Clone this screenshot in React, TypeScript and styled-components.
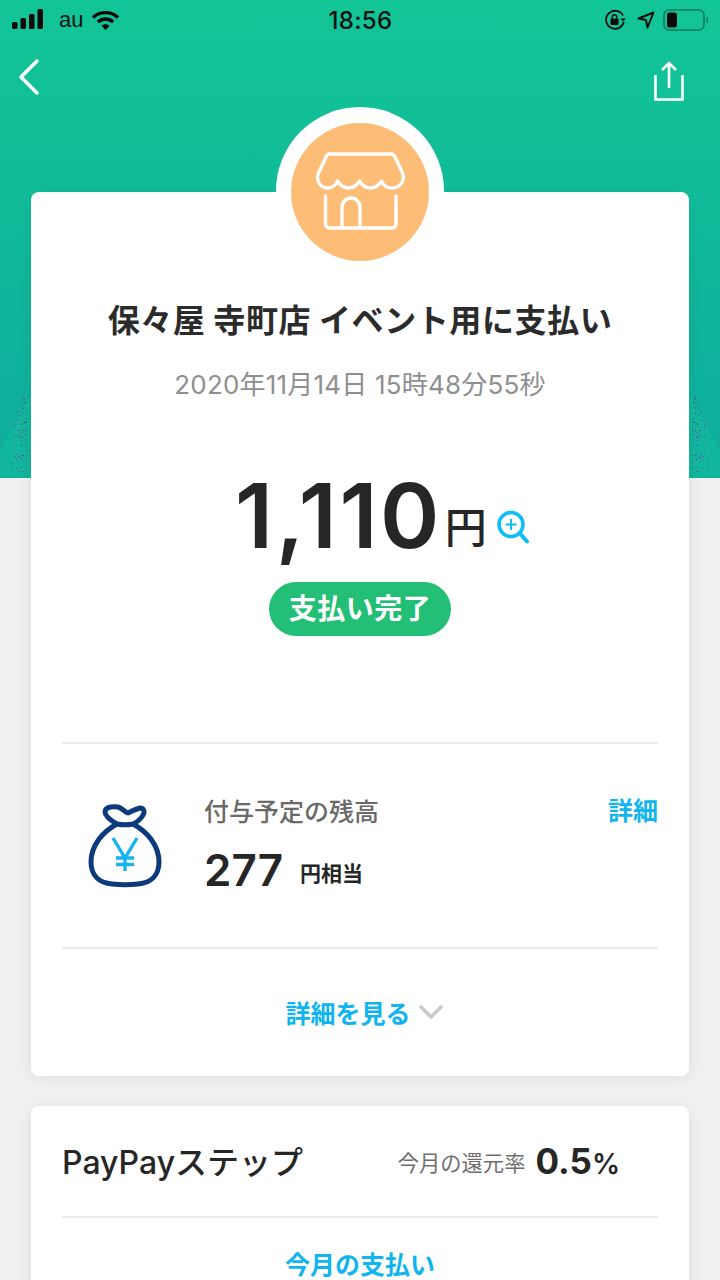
import React from "react";
import styled, { createGlobalStyle } from "styled-components";

const FONT = `"Noto Sans CJK JP", "Noto Sans", sans-serif`;
const LATIN = `Inter, "Noto Sans CJK JP", sans-serif`;
const BLUE = "#10b5f0";

const GlobalStyle = createGlobalStyle`
  html, body {
    margin: 0;
    padding: 0;
    height: 1280px;
    overflow: hidden;
    background: #f0f0f0;
    font-family: ${FONT};
  }
`;

const Page = styled.div`
  position: relative;
  width: 720px;
  height: 1280px;
  overflow: hidden;
`;

const Hero = styled.div`
  position: absolute;
  top: 0;
  left: 0;
  right: 0;
  height: 478px;
  background: linear-gradient(180deg, #12c596 0%, #11bc99 40%, #0fab9f 100%);
`;

const HeroCorner = styled.svg<{ $side: "left" | "right" }>`
  position: absolute;
  bottom: 0;
  ${(p) => p.$side}: 0;
  width: 31px;
  height: 90px;
`;

const Foreground = styled.div`
  position: relative;
  display: flex;
  flex-direction: column;
`;

const StatusBar = styled.div`
  height: 40px;
  padding: 0 11px 0 12px;
  display: grid;
  grid-template-columns: 1fr auto 1fr;
  align-items: center;
  color: #111;
`;

const StatusGroup = styled.div<{ $end?: boolean }>`
  display: flex;
  align-items: center;
  justify-content: ${(p) => (p.$end ? "flex-end" : "flex-start")};
  gap: 12px;
`;

const Carrier = styled.span`
  font-family: "Liberation Sans", sans-serif;
  font-size: 22px;
  margin-left: 3px;
`;

const Clock = styled.span`
  font-family: Inter, sans-serif;
  font-size: 24px;
  font-weight: 500;
  letter-spacing: 0.3px;
`;

const NavBar = styled.div`
  height: 74px;
  padding: 18px 36px 0 18px;
  display: flex;
  justify-content: space-between;
  align-items: flex-start;
  box-sizing: border-box;
`;

const Cards = styled.div`
  margin-top: 78px;
  padding: 0 31px;
  display: flex;
  flex-direction: column;
  gap: 30px;
`;

const Card = styled.section`
  position: relative;
  background: #fff;
  border-radius: 8px;
  box-shadow: 0 2px 14px rgba(0, 0, 0, 0.07);
`;

const ReceiptCard = styled(Card)`
  height: 884px;
  padding: 0 31px;
  box-sizing: border-box;
  display: flex;
  flex-direction: column;
  align-items: center;
`;

const AvatarRing = styled.div`
  position: absolute;
  top: -85px;
  left: 245px;
  width: 168px;
  height: 168px;
  padding-top: 2px;
  box-sizing: border-box;
  border-radius: 50%;
  background: #fff;
  display: flex;
  align-items: center;
  justify-content: center;
`;

const Avatar = styled.div`
  width: 138px;
  height: 138px;
  border-radius: 50%;
  background: #fdbd76;
  display: flex;
  align-items: center;
  justify-content: center;
`;

const ShopIcon = styled.svg`
  width: 90px;
  height: 78px;
  margin: 0 0 2px 2px;
  overflow: visible;
`;

const ShopTitle = styled.h1`
  margin: 102px 0 0;
  height: 48px;
  font-size: 32px;
  line-height: 48px;
  font-weight: 700;
  letter-spacing: 0.6px;
  color: #2b2b2b;
  white-space: nowrap;
`;

const PaidAt = styled.div`
  margin-top: 25px;
  height: 36px;
  font-family: ${LATIN};
  font-size: 26px;
  line-height: 36px;
  letter-spacing: 0.2px;
  color: #8f8f8f;
  white-space: nowrap;
`;

const AmountRow = styled.div`
  margin-top: 56px;
  height: 110px;
  display: flex;
  align-items: flex-end;
`;

const AmountValue = styled.span`
  font-family: Inter, sans-serif;
  font-size: 90px;
  line-height: 106px;
  font-weight: 600;
  letter-spacing: 2.500px;
  color: #262626;
`;

const AmountUnit = styled.span`
  margin: 0 0 16px 3px;
  font-size: 42px;
  line-height: 56px;
  font-weight: 500;
  color: #262626;
`;

const ZoomIcon = styled.svg`
  width: 32px;
  height: 34px;
  margin: 0 -44px 25px 10px;
`;

const StatusPill = styled.div`
  margin-top: 13px;
  height: 54px;
  padding: 0 20px;
  border-radius: 27px;
  background: #23bf76;
  color: #fff;
  font-size: 28px;
  line-height: 50px;
  font-weight: 700;
  letter-spacing: 0.5px;
`;

const Divider = styled.hr<{ $gap?: number }>`
  align-self: stretch;
  margin: ${(p) => p.$gap ?? 0}px 0 0;
  border: 0;
  border-top: 2px solid #ebebeb;
`;

const BalanceRow = styled.div`
  align-self: stretch;
  height: 203px;
  display: flex;
  box-sizing: border-box;
`;

const BagSlot = styled.div`
  width: 142px;
  padding: 60px 0 0 26px;
  box-sizing: border-box;
`;

const BalanceBody = styled.div`
  flex: 1;
  padding-top: 48px;
`;

const BalanceLabel = styled.div`
  font-size: 25px;
  line-height: 36px;
  font-weight: 500;
  color: #6a6a6a;
`;

const BalanceValue = styled.div`
  margin-top: 15px;
  display: flex;
  align-items: center;
  gap: 17px;
  color: #262626;
`;

const BalanceNumber = styled.span`
  font-family: Inter, sans-serif;
  font-size: 44px;
  line-height: 54px;
  font-weight: 600;
`;

const BalanceUnit = styled.span`
  margin-top: 4px;
  font-size: 21px;
  font-weight: 700;
`;

const LinkText = styled.span`
  font-size: 25px;
  line-height: 36px;
  font-weight: 700;
  color: ${BLUE};
`;

const DetailLink = styled(LinkText)`
  padding-top: 47px;
  height: fit-content;
`;

const MoreRow = styled.div`
  margin-top: 45px;
  margin-left: 8px;
  display: flex;
  align-items: center;
  gap: 8px;
`;

const StepCard = styled(Card)`
  height: 260px;
  padding: 0 31px;
`;

const StepHead = styled.div`
  height: 110px;
  display: flex;
  align-items: center;
  border-bottom: 2px solid #ebebeb;
`;

const StepTitle = styled.h2`
  margin: 0 0 2px;
  flex: 1;
  font-family: ${LATIN};
  font-size: 32px;
  font-weight: 500;
  color: #262626;
`;

const RateLabel = styled.span`
  font-size: 21.300px;
  color: #6e6e6e;
  margin-right: 10px;
`;

const RateValue = styled.span`
  font-family: Inter, sans-serif;
  font-size: 35px;
  font-weight: 700;
  color: #262626;
  margin-right: 38px;

  small {
    font-size: 28px;
    font-weight: 600;
  }
`;

const MonthLink = styled.div`
  margin-top: 27px;
  text-align: center;
`;

// scattered dither dots, thin at the top and wider towards the bottom
const noise = (n: number) => {
  const v = Math.sin(n * 127.1) * 43758.5453;
  return v - Math.floor(v);
};

const dots = (side: "left" | "right") => {
  const out: { x: number; y: number }[] = [];
  for (let i = 0; i < 60; i++) {
    const y = 8 + noise(i + 1) * 80;
    const spread = Math.min(16, 2 + (y / 40) * 14);
    const depth = 2 + noise(i + 101) * spread;
    out.push({ x: side === "left" ? 29 - depth : depth, y });
  }
  return out;
};

const Corner = ({ side }: { side: "left" | "right" }) => (
  <HeroCorner $side={side} viewBox="0 0 31 90">
    <polygon
      points={side === "left" ? "31,6 0,62 0,90 31,90" : "0,6 31,62 31,90 0,90"}
      fill="#12b69c"
    />
    {dots(side).map((d, i) => (
      <rect key={i} x={Math.round(d.x)} y={Math.round(d.y)} width="1" height="1" fill="#5a4f9c" />
    ))}
  </HeroCorner>
);

const Shop = () => (
  <ShopIcon viewBox="0 0 90 78" fill="none" stroke="#fff" strokeWidth="3.400" strokeLinecap="round" strokeLinejoin="round">
    <path d="M13 2H75C77 2 78 3 79 5L87 22C89 30 83 36 76 36C71 36 67 33 65.500 29C63 33 59 36 54.500 36C50 36 46 33 43.500 29C41 33 37 36 32.500 36C28 36 24 33 21.500 29C20 33 16 36 12 36C5 36 0 30 2 22L10 5C11 3 12 2 13 2Z" />
    <path d="M9.500 44V72a4 4 0 0 0 4 4H76a4 4 0 0 0 4-4V44" />
    <path d="M26 76V56C26 50 30 46 35 46C40 46 44 50 44 56V76" />
  </ShopIcon>
);

const Bag = () => (
  <svg width="74" height="84" viewBox="0 0 74 84" fill="none" strokeLinecap="round" strokeLinejoin="round">
    <path
      d="M29 20C14 28 3 42 3 58C3 72 12 79 24 80C32 81 42 81 50 80C62 79 71 72 71 58C71 42 60 28 45 20C49 18 53 15 55 11C57 8 56 4 52 4C48 5 44 7 40 9C37 8 34 4 30 3C24 2 17 3 17 8C17 12 22 16 29 20C34 21 40 21 45 20"
      stroke="#0d3a7d"
      strokeWidth="5"
    />
    <path d="M25 34L37 54L49 34M28 54H46M28 60.500H46M37 54V67" stroke="#15b4ee" strokeWidth="3.400" strokeLinecap="butt" strokeLinejoin="miter" />
  </svg>
);

export default function App() {
  return (
    <Page>
      <GlobalStyle />
      <Hero>
        <Corner side="left" />
        <Corner side="right" />
      </Hero>
      <Foreground>
        <StatusBar>
          <StatusGroup>
            <svg width="32" height="21" viewBox="0 0 32 21" fill="#0a0a0a" style={{ marginTop: -1 }}>
              <rect x="0" y="13" width="5.500" height="7" rx="1.500" />
              <rect x="8.500" y="9" width="5.500" height="11" rx="1.500" />
              <rect x="17" y="5" width="5.500" height="15" rx="1.500" />
              <rect x="25.500" y="0" width="5.500" height="20" rx="1.500" />
            </svg>
            <Carrier>au</Carrier>
            <svg width="29" height="21" viewBox="0 0 29 21" fill="none" stroke="#0a0a0a" strokeWidth="3.400" style={{ marginLeft: -4 }}>
              <path d="M2 7.500c7-6.500 18-6.500 25 0" />
              <path d="M6.800 12c4.500-4 10.900-4 15.400 0" />
              <path d="M14.500 20l-4-4.300c2.300-2 5.700-2 8 0z" fill="#0a0a0a" stroke="none" />
            </svg>
          </StatusGroup>
          <Clock>18:56</Clock>
          <StatusGroup $end>
            <svg width="22" height="22" viewBox="0 0 22 22" fill="none" stroke="#0a0a0a" strokeWidth="1.800">
              <path d="M19 6.500A9 9 0 1 0 19.800 13" />
              <path d="M16.500 9.500h5.500l-2.750 3z" fill="#0a0a0a" stroke="none" />
              <rect x="6.500" y="9.500" width="8" height="6.500" rx="1" fill="#0a0a0a" stroke="none" />
              <path d="M8.300 9.500V8a2.200 2.200 0 0 1 4.400 0v1.500" strokeWidth="1.400" />
            </svg>
            <svg width="18" height="18" viewBox="0 0 18 18" fill="none" stroke="#0a0a0a" strokeWidth="1.900" strokeLinejoin="round" style={{ marginLeft: -1 }}>
              <path d="M1.500 7.500L16.500 1.500 10.500 16.500 9 9z" />
            </svg>
            <svg width="46" height="22" viewBox="0 0 46 22" style={{ marginLeft: -4 }}>
              <rect x="1" y="1" width="40" height="20" rx="5" fill="none" stroke="#0a7a62" strokeWidth="1.600" />
              <rect x="4" y="3.500" width="10" height="15" rx="2.500" fill="#0a0a0a" />
              <rect x="43.500" y="8" width="1.500" height="6" rx="0.700" fill="#0a7a62" />
            </svg>
          </StatusGroup>
        </StatusBar>
        <NavBar>
          <svg width="24" height="38" viewBox="0 0 24 38" fill="none" stroke="#fff" strokeWidth="3.600" strokeLinecap="round" strokeLinejoin="round">
            <path d="M19 3L3 19l16 16" />
          </svg>
          <svg width="30" height="40" viewBox="0 0 30 40" fill="none" stroke="#fff" strokeWidth="2.600" style={{ marginTop: 3 }}>
            <path d="M8 9L15 2l7 7M15 2v25" />
            <path d="M1.500 14v24.500h27V14" />
          </svg>
        </NavBar>
        <Cards>
          <ReceiptCard>
            <AvatarRing>
              <Avatar>
                <Shop />
              </Avatar>
            </AvatarRing>
            <ShopTitle>保々屋 寺町店 イベント用に支払い</ShopTitle>
            <PaidAt>2020年11月14日 15時48分55秒</PaidAt>
            <AmountRow>
              <AmountValue>1,110</AmountValue>
              <AmountUnit>円</AmountUnit>
              <ZoomIcon viewBox="0 0 32 34" fill="none" stroke="#10bdf5">
                <circle cx="14" cy="14.500" r="12" strokeWidth="3.600" />
                <path d="M14 9v11M8.500 14.500h11" strokeWidth="2" />
                <path d="M23.500 24l6.500 7.500" strokeWidth="4" strokeLinecap="round" />
              </ZoomIcon>
            </AmountRow>
            <StatusPill>支払い完了</StatusPill>
            <Divider $gap={106} />
            <BalanceRow>
              <BagSlot>
                <Bag />
              </BagSlot>
              <BalanceBody>
                <BalanceLabel>付与予定の残高</BalanceLabel>
                <BalanceValue>
                  <BalanceNumber>277</BalanceNumber>
                  <BalanceUnit>円相当</BalanceUnit>
                </BalanceValue>
              </BalanceBody>
              <DetailLink>詳細</DetailLink>
            </BalanceRow>
            <Divider />
            <MoreRow>
              <LinkText>詳細を見る</LinkText>
              <svg width="24" height="15" viewBox="0 0 24 15" fill="none" stroke="#cbcbcb" strokeWidth="3.600" strokeLinecap="round" strokeLinejoin="round">
                <path d="M2 2l10 10L22 2" />
              </svg>
            </MoreRow>
          </ReceiptCard>
          <StepCard>
            <StepHead>
              <StepTitle>PayPayステップ</StepTitle>
              <RateLabel>今月の還元率</RateLabel>
              <RateValue>
                0.5<small>%</small>
              </RateValue>
            </StepHead>
            <MonthLink>
              <LinkText>今月の支払い</LinkText>
            </MonthLink>
          </StepCard>
        </Cards>
      </Foreground>
    </Page>
  );
}
